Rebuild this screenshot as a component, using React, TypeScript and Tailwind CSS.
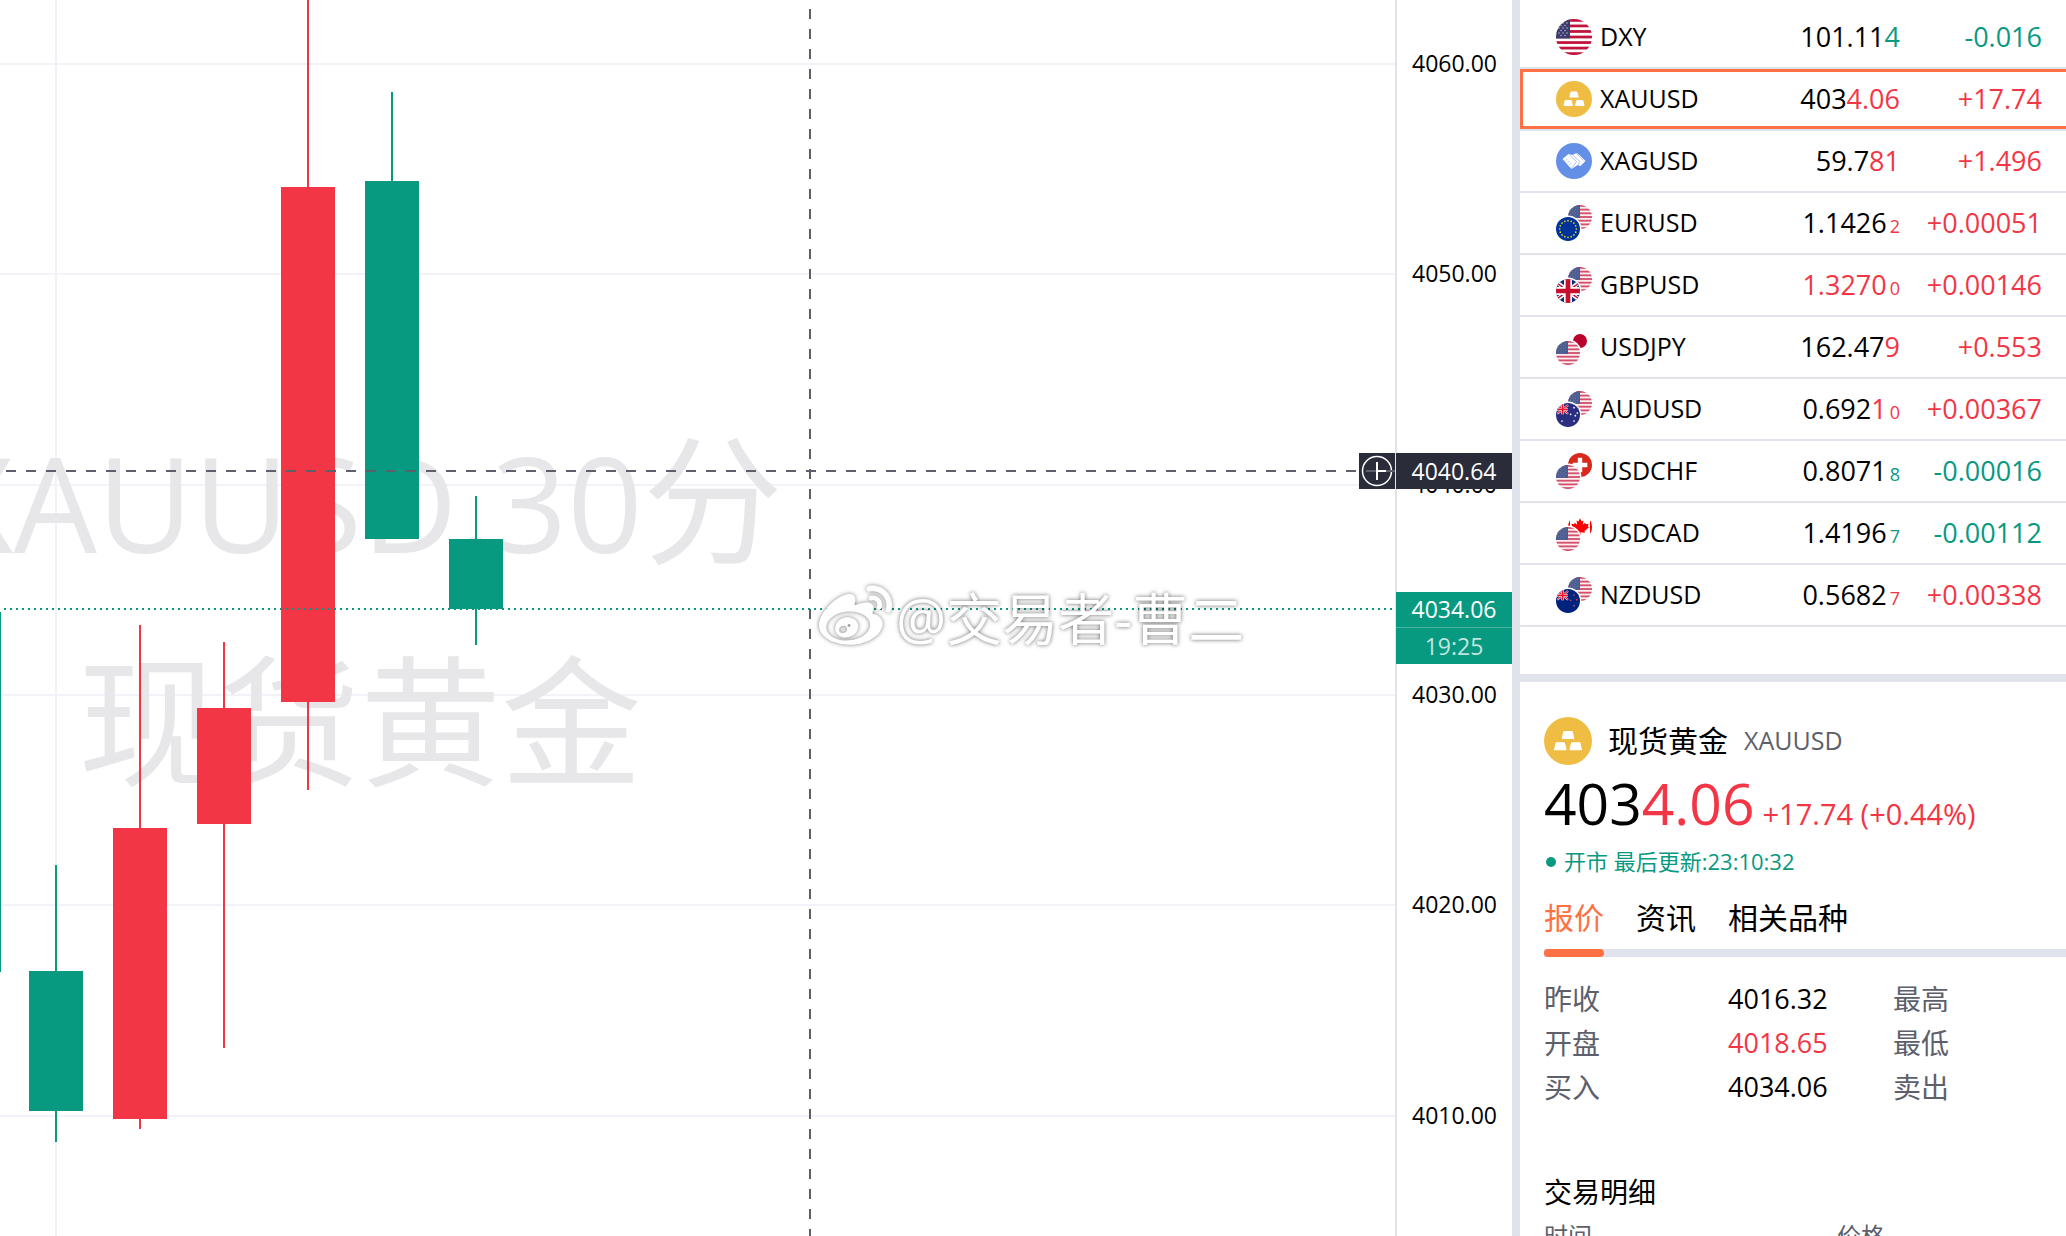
import type { ReactNode } from 'react';
import { FaWeibo } from 'react-icons/fa';

const UP = '#f23645';
const DOWN = '#089981';

/* ---------- chart data ---------- */

type Candle = { x: number; open: number; close: number; high: number; low: number; up: boolean };

const candles: Candle[] = [
  { x: -26, open: 612, close: 972, high: 612, low: 972, up: false },
  { x: 56, open: 971, close: 1111, high: 865, low: 1142, up: false },
  { x: 140, open: 828, close: 1119, high: 625, low: 1129, up: true },
  { x: 224, open: 708, close: 824, high: 642, low: 1048, up: true },
  { x: 308, open: 187, close: 702, high: -10, low: 790, up: true },
  { x: 392, open: 181, close: 539, high: 92, low: 539, up: false },
  { x: 476, open: 539, close: 609, high: 496, low: 645, up: false },
];

const ticks = [4060, 4050, 4040, 4030, 4020, 4010];
const priceToY = (price: number) => Math.round(64 + (4060 - price) * 21.03);

/* ---------- flags and icons ---------- */

const stars = [
  [3, 3], [7, 3], [11, 3], [5, 5.5], [9, 5.5], [3, 8], [7, 8], [11, 8],
  [5, 10.5], [9, 10.5], [3, 13], [7, 13], [11, 13], [5, 15.5], [9, 15.5],
];

const stripes = [0, 1, 2, 3, 4, 5, 6];

function UsArt({ soft }: { soft?: boolean }) {
  const w = soft ? 18 : 14;
  return (
    <>
      <rect width="36" height="36" fill={soft ? '#fbeef1' : '#fff'} />
      {stripes.map((i) => (
        <rect key={i} y={i * 5.54} width="36" height="2.77" fill={soft ? '#d4506c' : '#c0143c'} />
      ))}
      <rect width={w} height="19.4" fill={soft ? '#4b5c8f' : '#3c3b6e'} />
      {stars.map(([x, y]) => (
        <circle key={`${x}-${y}`} cx={(x * w) / 14} cy={y + 1} r="0.7" fill={soft ? '#8d98bb' : '#c9c9dc'} />
      ))}
    </>
  );
}

function UnionJack() {
  return (
    <>
      <rect width="36" height="36" fill="#0a2f7a" />
      <path d="M0 4L36 32M36 4L0 32" stroke="#fff" strokeWidth="6" />
      <path d="M0 5L36 31M36 5L0 31" stroke="#c8102e" strokeWidth="2" />
      <path d="M18 0V36M0 18H36" stroke="#fff" strokeWidth="12" />
      <path d="M18 0V36M0 18H36" stroke="#c8102e" strokeWidth="7" />
    </>
  );
}

function EuArt() {
  return (
    <>
      <rect width="36" height="36" fill="#003399" />
      {Array.from({ length: 16 }, (_, i) => {
        const a = (i * Math.PI) / 8;
        return <circle key={i} cx={18 + 12.5 * Math.sin(a)} cy={18 - 12.5 * Math.cos(a)} r="1.3" fill="#d9d32a" />;
      })}
    </>
  );
}

type SouthernProps = { base: string; star: string; points: number[][] };

function SouthernArt({ base, star, points }: SouthernProps) {
  return (
    <>
      <rect width="36" height="36" fill={base} />
      <path d="M2 3L18 16M18 3L2 16" stroke="#fff" strokeWidth="3" />
      <path d="M2 3L18 16M18 3L2 16" stroke="#e8112d" strokeWidth="1.6" />
      <path d="M10 0V17M0 9.5H18" stroke="#fff" strokeWidth="4" />
      <path d="M10 0V17M0 9.5H18" stroke="#e8112d" strokeWidth="2.4" />
      {points.map(([x, y]) => (
        <circle key={`${x}-${y}`} cx={x} cy={y} r="1.3" fill={star} />
      ))}
    </>
  );
}

const art: Record<string, ReactNode> = {
  us: <UsArt soft />,
  eu: <EuArt />,
  gb: <UnionJack />,
  jp: (
    <>
      <rect width="36" height="36" fill="#fff" />
      <circle cx="18" cy="18" r="17.4" fill="none" stroke="#eeeef0" strokeWidth="1.2" />
      <circle cx="18" cy="18" r="10.5" fill="#bc002d" />
    </>
  ),
  au: <SouthernArt base="#2a2e80" star="#fff" points={[[9, 27], [27, 7], [22, 17], [32, 15], [27, 27], [29, 19]]} />,
  nz: <SouthernArt base="#00247d" star="#cc4466" points={[[27, 9], [22, 17], [31, 16], [27, 25]]} />,
  ch: (
    <>
      <rect width="36" height="36" fill="#d9291c" />
      <path d="M18 7V29M7 18H29" stroke="#fff" strokeWidth="6.6" />
    </>
  ),
  ca: (
    <>
      <rect width="36" height="36" fill="#fff" />
      <path d="M0 0H3V36H0ZM33 0H36V36H33Z" fill="#f00" />
      <path
        d="M18 5l2.400 4.600 2.800-1.400-1 6.600 3.600-3 1 2 4.200-.7-1.400 4 2 1.400-6.800 5.600.6 2.400-6.600-.8.2 6h-2l.2-6-6.600.8.6-2.400-6.800-5.600 2-1.400-1.400-4 4.200.7 1-2 3.600 3-1-6.600 2.800 1.400z"
        fill="#f00"
      />
    </>
  ),
};

function PairIcon({ id, front, back }: { id: string; front: string; back: string }) {
  return (
    <svg viewBox="0 0 36 36" className="size-9 shrink-0" aria-hidden="true">
      <defs>
        <clipPath id={`${id}-c`}>
          <circle cx="18" cy="18" r="18" />
        </clipPath>
      </defs>
      <g transform="translate(12 0) scale(0.6667)">
        <g clipPath={`url(#${id}-c)`}>{art[back]}</g>
      </g>
      <circle cx="12" cy="24" r="13.4" fill="#fff" />
      <g transform="translate(0 12) scale(0.6667)">
        <g clipPath={`url(#${id}-c)`}>{art[front]}</g>
      </g>
    </svg>
  );
}

function UsIcon() {
  return (
    <svg viewBox="0 0 36 36" className="size-9 shrink-0" aria-hidden="true">
      <clipPath id="us-round">
        <circle cx="18" cy="18" r="18" />
      </clipPath>
      <g clipPath="url(#us-round)">
        <UsArt />
      </g>
    </svg>
  );
}

function GoldIcon({ className }: { className: string }) {
  return (
    <svg viewBox="0 0 36 36" className={className} aria-hidden="true">
      <circle cx="18" cy="18" r="18" fill="#efbd43" />
      <g fill="#fff" stroke="#fff" strokeWidth="1" strokeLinejoin="round">
        <path d="M15 11h6l1.200 5h-8.400z" />
        <path d="M9.200 19.500h6l1.200 5H8z" />
        <path d="M20.800 19.500h6l1.200 5h-8.400z" />
      </g>
    </svg>
  );
}

function SilverIcon() {
  return (
    <svg viewBox="0 0 36 36" className="size-9 shrink-0" aria-hidden="true">
      <circle cx="18" cy="18" r="18" fill="#648fe6" />
      <path d="M6.500 16l6-5 4 1 4-2 3 2 6 6-5 5-3-1-6 4z" fill="#fff" />
      <path
        d="M12.500 11l8 7.500-5 7M16.500 12l7.500 6.500-2 3.500M20.500 10.500l7 7M9.500 17.500l2-1.500M11.500 19.500l2-1.500M13.500 21.500l2-1.500"
        fill="none"
        stroke="#9db9f2"
        strokeWidth="0.8"
      />
    </svg>
  );
}

/* ---------- quotes ---------- */

type Quote = {
  symbol: string;
  icon: ReactNode;
  steady: string;
  moved: string;
  pip?: string;
  tone: 'up' | 'down';
  change: string;
  changeTone: 'up' | 'down';
  selected?: boolean;
};

const quotes: Quote[] = [
  { symbol: 'DXY', icon: <UsIcon />, steady: '101.11', moved: '4', tone: 'down', change: '-0.016', changeTone: 'down' },
  { symbol: 'XAUUSD', icon: <GoldIcon className="size-9 shrink-0" />, steady: '403', moved: '4.06', tone: 'up', change: '+17.74', changeTone: 'up', selected: true },
  { symbol: 'XAGUSD', icon: <SilverIcon />, steady: '59.7', moved: '81', tone: 'up', change: '+1.496', changeTone: 'up' },
  { symbol: 'EURUSD', icon: <PairIcon id="eurusd" front="eu" back="us" />, steady: '1.1426', moved: '', pip: '2', tone: 'up', change: '+0.00051', changeTone: 'up' },
  { symbol: 'GBPUSD', icon: <PairIcon id="gbpusd" front="gb" back="us" />, steady: '', moved: '1.3270', pip: '0', tone: 'up', change: '+0.00146', changeTone: 'up' },
  { symbol: 'USDJPY', icon: <PairIcon id="usdjpy" front="us" back="jp" />, steady: '162.47', moved: '9', tone: 'up', change: '+0.553', changeTone: 'up' },
  { symbol: 'AUDUSD', icon: <PairIcon id="audusd" front="au" back="us" />, steady: '0.692', moved: '1', pip: '0', tone: 'up', change: '+0.00367', changeTone: 'up' },
  { symbol: 'USDCHF', icon: <PairIcon id="usdchf" front="us" back="ch" />, steady: '0.8071', moved: '', pip: '8', tone: 'down', change: '-0.00016', changeTone: 'down' },
  { symbol: 'USDCAD', icon: <PairIcon id="usdcad" front="us" back="ca" />, steady: '1.4196', moved: '', pip: '7', tone: 'down', change: '-0.00112', changeTone: 'down' },
  { symbol: 'NZDUSD', icon: <PairIcon id="nzdusd" front="nz" back="us" />, steady: '0.5682', moved: '', pip: '7', tone: 'up', change: '+0.00338', changeTone: 'up' },
];

const toneClass = { up: 'text-[#f23645]', down: 'text-[#089981]' };

function QuoteRow({ quote }: { quote: Quote }) {
  const edge = quote.selected ? 'border-y-3 border-[#ff7043]' : 'border-y-3 border-transparent';
  const cell = `flex h-[60px] items-center ${edge}`;
  return (
    <tr>
      <td className="border-b-2 border-[#e0e3eb] p-0">
        <div className={`${cell} gap-2 border-l-3 pl-[33px] text-[25px]`}>
          {quote.icon}
          <span>{quote.symbol}</span>
        </div>
      </td>
      <td className="border-b-2 border-[#e0e3eb] p-0">
        <div className={`${cell} justify-end`}>
          <span>
            {quote.steady}
            <span className={toneClass[quote.tone]}>
              {quote.moved}
              {quote.pip && <span className="ml-[3px] text-lg">{quote.pip}</span>}
            </span>
          </span>
        </div>
      </td>
      <td className="border-b-2 border-[#e0e3eb] p-0">
        <div className={`${cell} justify-end pr-6 ${toneClass[quote.changeTone]}`}>{quote.change}</div>
      </td>
    </tr>
  );
}

function Watchlist() {
  return (
    <section className="h-[682px] shrink-0 overflow-hidden border-b-8 border-[#e0e3eb] pt-[7px]">
      <table className="w-full table-fixed border-separate border-spacing-0 text-[27px]">
        <colgroup>
          <col />
          <col className="w-[140px]" />
          <col className="w-[166px]" />
        </colgroup>
        <tbody>
          {quotes.map((quote) => (
            <QuoteRow key={quote.symbol} quote={quote} />
          ))}
        </tbody>
      </table>
    </section>
  );
}

/* ---------- detail panel ---------- */

const stats = [
  { label: '昨收', value: '4016.32', tone: '', other: '最高' },
  { label: '开盘', value: '4018.65', tone: 'text-[#f23645]', other: '最低' },
  { label: '买入', value: '4034.06', tone: '', other: '卖出' },
];

const tabs = ['报价', '资讯', '相关品种'];

function Detail() {
  return (
    <section className="flex flex-col overflow-hidden pt-[35px] pl-6">
      <header className="flex h-12 items-center">
        <GoldIcon className="size-12 shrink-0" />
        <h1 className="ml-4 text-[30px] leading-[44px]">现货黄金</h1>
        <span className="ml-4 text-[25px] text-[#5d606b]">XAUUSD</span>
      </header>
      <p className="flex h-[72px] items-baseline whitespace-nowrap text-[57px] leading-[76px]">
        <span>403</span>
        <span className="text-[#f23645]">4.06</span>
        <span className="ml-2 text-[29px] text-[#f23645]">+17.74 (+0.44%)</span>
      </p>
      <p className="mt-2 flex h-9 items-center gap-2 text-[22px] text-[#089981]">
        <span className="ml-[2px] size-[10px] rounded-full bg-[#089981]" />
        <span>开市 最后更新:23:10:32</span>
      </p>
      <nav className="mt-5 flex gap-8 border-b-8 border-[#e0e3eb] text-[30px] leading-[40px]">
        {tabs.map((tab, i) => (
          <button
            key={tab}
            type="button"
            className={
              i === 0
                ? "relative pb-[11px] text-[#ff7043] after:absolute after:inset-x-0 after:-bottom-2 after:h-2 after:rounded-sm after:bg-[#ff7043] after:content-['']"
                : 'pb-[11px]'
            }
          >
            {tab}
          </button>
        ))}
      </nav>
      <table className="mt-5 w-full table-fixed text-[27px] leading-[44px]">
        <colgroup>
          <col className="w-[184px]" />
          <col className="w-[165px]" />
          <col />
        </colgroup>
        <tbody>
          {stats.map((row) => (
            <tr key={row.label}>
              <th scope="row" className="p-0 text-left text-[28px] font-normal text-[#5d606b]">{row.label}</th>
              <td className={`p-0 ${row.tone}`}>{row.value}</td>
              <th scope="row" className="p-0 text-left text-[28px] font-normal text-[#5d606b]">{row.other}</th>
            </tr>
          ))}
        </tbody>
      </table>
      <h2 className="mt-[61px] text-[28px] leading-[44px]">交易明细</h2>
      <table className="w-full table-fixed text-left text-2xl leading-[44px] text-[#5d606b]">
        <thead>
          <tr>
            <th className="w-[293px] p-0 font-normal">时间</th>
            <th className="p-0 font-normal">价格</th>
          </tr>
        </thead>
      </table>
    </section>
  );
}

/* ---------- chart ---------- */

function Chart() {
  return (
    <section className="relative min-w-0 flex-1 overflow-hidden">
      <svg className="absolute inset-0 size-full" aria-label="XAUUSD 30分">
        <rect x="55" width="2" height="100%" fill="#f0f2f8" />
        {ticks.map((tick) => (
          <rect key={tick} y={priceToY(tick) - 1} width="100%" height="2" fill="#f2f3f9" />
        ))}
        <g fill="#e7e7e9" textAnchor="middle">
          <text x="360" y="553" fontSize="132">
            XAUUSD,30<tspan fontSize="140">分</tspan>
          </text>
          <text x="360" y="775" fontSize="141">现货黄金</text>
        </g>
        {candles.map((c) => (
          <g key={c.x} fill={c.up ? UP : DOWN}>
            <rect x={c.x - 1} y={c.high} width="2" height={c.low - c.high} />
            <rect x={c.x - 27} y={c.open} width="54" height={c.close - c.open} />
          </g>
        ))}
        <line x1="4" x2="100%" y1="609" y2="609" stroke={DOWN} strokeWidth="2" strokeDasharray="2 4" />
        <line x1="810" x2="810" y1="9" y2="100%" stroke="#5d606b" strokeWidth="2" strokeDasharray="10 10" />
      </svg>
      <div className="absolute top-[581px] left-[819px] flex items-center gap-1 whitespace-nowrap text-[56px] leading-[70px] text-white [text-shadow:0_0_4px_rgba(0,0,0,0.6)]">
        <FaWeibo className="size-[73px] [filter:drop-shadow(0_0_2px_rgba(0,0,0,0.5))]" />
        <span>@交易者-曹二</span>
      </div>
      <button
        type="button"
        aria-label="添加"
        className="absolute top-[453px] right-0 flex h-9 w-9 items-center justify-center bg-[#2a2c39]"
      >
        <svg viewBox="0 0 36 36" className="size-9" fill="none" stroke="#fff" strokeWidth="2">
          <circle cx="18" cy="18" r="14.5" strokeWidth="1.5" />
          <path d="M18 9V27M9 18H27" />
        </svg>
      </button>
      <svg className="pointer-events-none absolute inset-0 size-full" aria-hidden="true">
        <line x1="6" x2="100%" y1="471" y2="471" stroke="#5d606b" strokeWidth="2" strokeDasharray="10 10" />
      </svg>
    </section>
  );
}

function PriceAxis() {
  return (
    <div className="relative w-[117px] shrink-0 border-l-2 border-[#e0e3eb] text-center text-[23px] leading-9">
      {ticks.map((tick) => (
        <div key={tick} className="absolute inset-x-0" style={{ top: priceToY(tick) - 19 }}>
          {tick.toFixed(2)}
        </div>
      ))}
      <div className="absolute inset-x-0 -left-px bg-[#2a2c39] text-white" style={{ top: priceToY(4040.64) - 18 }}>
        4040.64
      </div>
      <div className="absolute inset-x-0 -left-px bg-[#089981] text-white" style={{ top: priceToY(4034.06) - 18 }}>
        <div className="leading-[35px]">4034.06</div>
        <div className="border-t border-[#4ab5a3] text-white/75">19:25</div>
      </div>
    </div>
  );
}

export default function App() {
  return (
    <main className="flex h-screen overflow-hidden bg-white font-['Open_Sans','Noto_Sans_CJK_SC',sans-serif] text-black">
      <Chart />
      <PriceAxis />
      <aside className="flex w-[554px] shrink-0 flex-col overflow-hidden border-l-8 border-[#e0e3eb]">
        <Watchlist />
        <Detail />
      </aside>
    </main>
  );
}
